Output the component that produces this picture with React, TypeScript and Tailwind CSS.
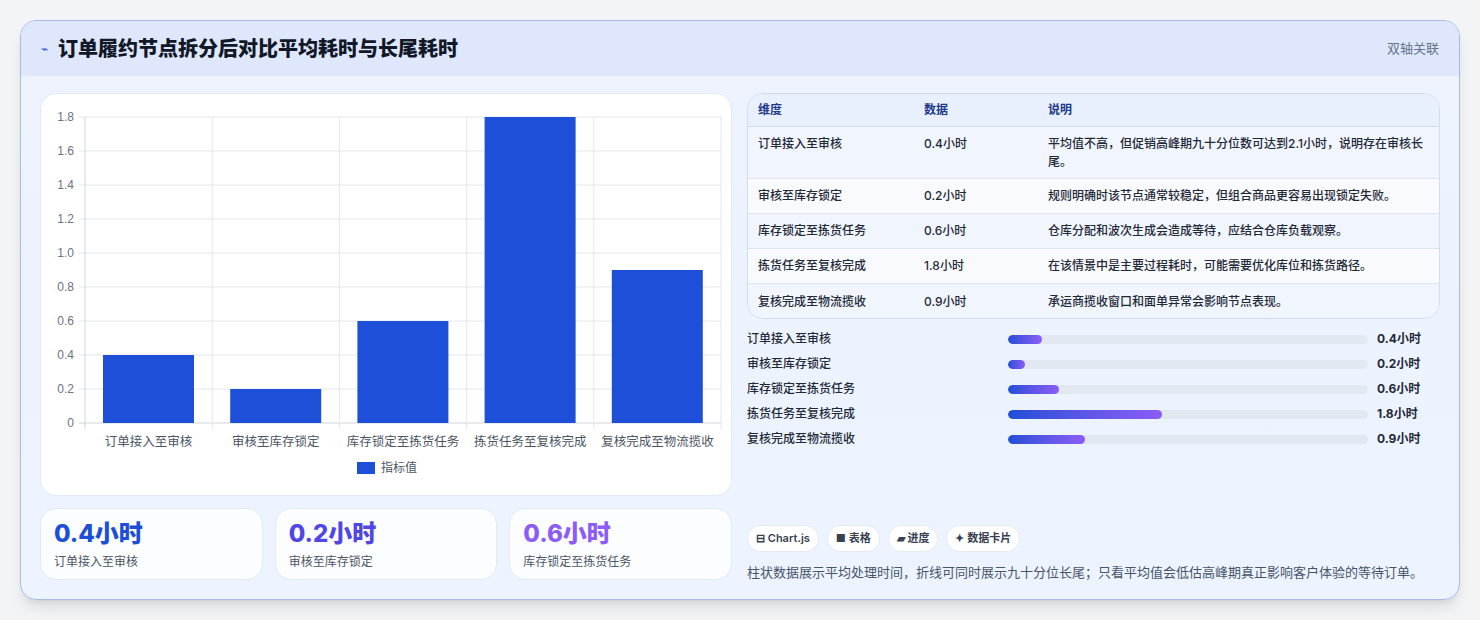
import React from "react";

const rows = [
  { k: "订单接入至审核", v: 0.4, d: "平均值不高，但促销高峰期九十分位数可达到2.1小时，说明存在审核长尾。" },
  { k: "审核至库存锁定", v: 0.2, d: "规则明确时该节点通常较稳定，但组合商品更容易出现锁定失败。" },
  { k: "库存锁定至拣货任务", v: 0.6, d: "仓库分配和波次生成会造成等待，应结合仓库负载观察。" },
  { k: "拣货任务至复核完成", v: 1.8, d: "在该情景中是主要过程耗时，可能需要优化库位和拣货路径。" },
  { k: "复核完成至物流揽收", v: 0.9, d: "承运商揽收窗口和面单异常会影响节点表现。" },
];

function Chart() {
  const x0 = 44, x1 = 680, y0 = 23, y1 = 329;
  const cw = (x1 - x0) / 5;
  const ticks = [0, 0.2, 0.4, 0.6, 0.8, 1.0, 1.2, 1.4, 1.6, 1.8];
  const yOf = (v: number) => y1 - (v / 1.8) * (y1 - y0);
  return (
    <svg width="692" height="403" className="block">
      {ticks.map((t) => (
        <g key={t}>
          <line x1={x0 - 6} x2={x1} y1={yOf(t)} y2={yOf(t)} stroke={t === 0 ? "#d1d5db" : "#e5e7eb"} />
          <text x={33} y={yOf(t) + 4} textAnchor="end" fontSize="12" fill="#6b7280" fontFamily="Liberation Sans, sans-serif">
            {t === 0 ? "0" : t.toFixed(1)}
          </text>
        </g>
      ))}
      {[0, 1, 2, 3, 4, 5].map((i) => (
        <line key={i} x1={x0 + i * cw} x2={x0 + i * cw} y1={y0} y2={y1 + 6} stroke={i === 0 ? "#d1d5db" : "#e5e7eb"} />
      ))}
      {rows.map((r, i) => (
        <g key={r.k}>
          <rect x={x0 + i * cw + 18} y={yOf(r.v)} width={91} height={y1 - yOf(r.v)} fill="#1d4fd8" />
          <text x={x0 + i * cw + cw / 2} y={352} textAnchor="middle" fontSize="12.5" fill="#4b5563" fontFamily="Noto Sans CJK SC, sans-serif">
            {r.k}
          </text>
        </g>
      ))}
      <rect x={316} y={368} width={18} height={12} fill="#1d4fd8" />
      <text x={340} y={378} fontSize="12" fill="#4b5563" fontFamily="Noto Sans CJK SC, sans-serif">指标值</text>
    </svg>
  );
}

export default function App() {
  const f = { fontFamily: "Inter, 'Noto Sans CJK SC', sans-serif" };
  return (
    <div className="w-[1480px] h-[620px] bg-[#f3f4f6] pt-5 px-5" style={f}>
      <div className="h-[580px] rounded-2xl border border-[#a9b9e8] overflow-hidden bg-gradient-to-b from-[#eef3fe] to-[#edf4ff] shadow-lg">
        <div className="h-[55px] bg-[#dfe7fd] flex items-center justify-between px-5">
          <div className="flex items-center gap-2.5">
            <span className="text-[#2c54d6] text-xs">⌁</span>
            <span className="text-[20px] font-extrabold text-[#111827]">订单履约节点拆分后对比平均耗时与长尾耗时</span>
          </div>
          <span className="text-[13px] text-[#64748b]">双轴关联</span>
        </div>
        <div className="flex gap-[15px] px-[19px] pt-[17px]">
          <div className="w-[692px] flex flex-col gap-3">
            <div className="h-[403px] bg-white rounded-2xl border border-[#e3e9f5]">
              <Chart />
            </div>
            <div className="flex gap-3">
              {[
                ["0.4小时", "订单接入至审核", "text-[#1d4ed8]"],
                ["0.2小时", "审核至库存锁定", "text-[#4f46e5]"],
                ["0.6小时", "库存锁定至拣货任务", "text-[#8b5cf6]"],
              ].map(([a, b, c]) => (
                <div key={b} className="flex-1 h-[72px] rounded-2xl bg-white/80 border border-[#e3e9f5] px-[13px] pt-[10px]">
                  <div className={`text-[24px] font-extrabold leading-[30px] ${c}`}>{a}</div>
                  <div className="text-[12px] text-[#4b5563] mt-1">{b}</div>
                </div>
              ))}
            </div>
          </div>
          <div className="w-[693px] flex flex-col">
            <div className="h-[226px] rounded-2xl border border-[#d3dcef] overflow-hidden text-[12px] text-[#1f2937]">
              <div className="flex h-[33px] items-center bg-[#e9f0fd] font-semibold text-[#1e3a8a] border-b border-[#d3dcef]">
                <div className="w-[176px] pl-[10px]">维度</div>
                <div className="w-[124px]">数据</div>
                <div className="flex-1">说明</div>
              </div>
              {rows.map((r, i) => (
                <div key={r.k} className={`flex ${i === 0 ? "h-[52px] items-start pt-[8px]" : "h-[35px] items-center"} leading-[18px] ${i % 2 === 0 ? "bg-[#f0f5fe]" : "bg-[#f8fafd]"} ${i < 4 ? "border-b border-[#dde4f2]" : ""}`}>
                  <div className="w-[176px] pl-[10px] font-medium">{r.k}</div>
                  <div className="w-[124px] font-medium">{r.v}小时</div>
                  <div className="flex-1 pr-1 font-medium">{r.d}</div>
                </div>
              ))}
            </div>
            <div className="flex flex-col gap-[7px] mt-[11px]">
              {rows.map((r) => (
                <div key={r.k} className="flex items-center h-[18px] text-[12px] whitespace-nowrap">
                  <div className="w-[261px] text-[#1f2937] font-medium">{r.k}</div>
                  <div className="w-[360px] h-[9px] rounded-full bg-[#e2e8f0] overflow-hidden">
                    <div className="h-full rounded-full bg-gradient-to-r from-[#1d4ed8] to-[#8b5cf6]" style={{ width: `${(r.v / 4.2) * 100}%`, minWidth: 16 }} />
                  </div>
                  <div className="ml-[9px] font-bold text-[#1f2937]">{r.v}小时</div>
                </div>
              ))}
            </div>
            <div className="flex gap-2 mt-[77px]">
              {["⊟ Chart.js", "■ 表格", "▰ 进度", "✦ 数据卡片"].map((c) => (
                <span key={c} className="h-[27px] px-[8px] rounded-full bg-white border border-[#e5eaf3] text-[11px] font-semibold text-[#374151] flex items-center">{c}</span>
              ))}
            </div>
            <div className="mt-[11px] text-[13px] text-[#475569] whitespace-nowrap">柱状数据展示平均处理时间，折线可同时展示九十分位长尾；只看平均值会低估高峰期真正影响客户体验的等待订单。</div>
          </div>
        </div>
      </div>
    </div>
  );
}
